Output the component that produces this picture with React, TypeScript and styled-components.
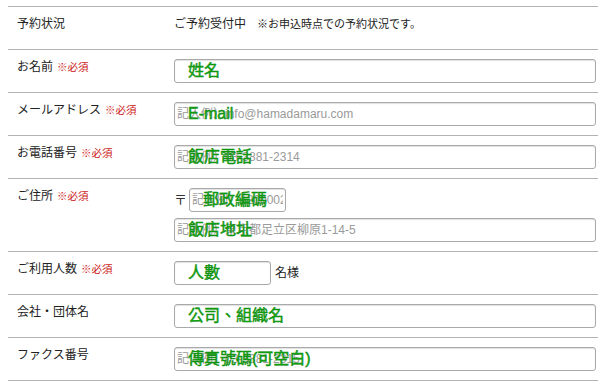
import React from "react";
import styled, { createGlobalStyle } from "styled-components";

const GlobalStyle = createGlobalStyle`
  html, body {
    margin: 0;
    padding: 0;
    background: #ffffff;
  }
  body {
    font-family: "Liberation Sans", "Noto Sans CJK JP", sans-serif;
    color: #333333;
  }
`;

const Page = styled.div`
  width: 600px;
  padding: 6px 2px 0 8px;
  box-sizing: border-box;
`;

const Table = styled.div`
  border-top: 1px solid #b2b2b2;
`;

const Row = styled.div`
  display: grid;
  grid-template-columns: 166px 1fr;
  min-height: 43px;
  box-sizing: border-box;
  border-bottom: 1px solid #b2b2b2;
`;

const Label = styled.div`
  padding: 10px 0 0 9px;
  font-size: 12px;
  line-height: 14px;
  color: #222222;
  white-space: nowrap;
`;

const Required = styled.span`
  margin-left: 4px;
  font-size: 10.5px;
  color: #cc2020;
`;

const Value = styled.div<{ $text?: boolean }>`
  padding: ${(p) => (p.$text ? "10px 2px 0 0" : "9px 2px 9px 0")};
  display: flex;
  flex-direction: column;
  gap: 6px;
  font-size: 12px;
  line-height: 14px;
`;

const Status = styled.div`
  display: flex;
  align-items: baseline;
  gap: 11px;
  color: #222222;
`;

const Note = styled.span`
  font-size: 11px;
`;

const Line = styled.div`
  display: flex;
  align-items: center;
  gap: 3px;
`;

const Field = styled.div<{ $w?: number }>`
  position: relative;
  width: ${(p) => (p.$w ? `${p.$w}px` : "100%")};
  flex: none;
`;

const Input = styled.input`
  display: block;
  width: 100%;
  height: 24px;
  box-sizing: border-box;
  margin: 0;
  padding: 0 2px;
  border: 1px solid #a9a9a9;
  border-radius: 3px;
  box-shadow: inset 0 1px 1px rgba(0, 0, 0, 0.12);
  font-family: "Liberation Sans", "Noto Sans CJK JP", sans-serif;
  font-size: 12px;
  color: #333333;
  background: #ffffff;
  &::placeholder {
    color: #9a9a9a;
  }
`;

const Overlay = styled.span`
  position: absolute;
  left: 14px;
  top: 50%;
  transform: translateY(-52%);
  font-family: "Liberation Sans", "Noto Sans CJK TC", sans-serif;
  font-size: 16px;
  font-weight: 400;
  line-height: 18px;
  color: #10a510;
  -webkit-text-stroke: 0.45px #0c8a0c;
  white-space: nowrap;
  pointer-events: none;
`;

const Postal = styled.span`
  font-size: 13px;
  width: 12px;
`;

const Suffix = styled.span`
  margin-left: 1px;
  color: #222222;
`;

type FieldProps = { note: string; placeholder?: string; width?: number };

const AnnotatedInput = ({ note, placeholder, width }: FieldProps) => (
  <Field $w={width}>
    <Input placeholder={placeholder} />
    <Overlay>{note}</Overlay>
  </Field>
);

const Must = () => <Required>※必須</Required>;

export default function App() {
  return (
    <>
      <GlobalStyle />
      <Page>
        <Table>
          <Row>
            <Label>予約状況</Label>
            <Value $text>
              <Status>
                <span>ご予約受付中</span>
                <Note>※お申込時点での予約状況です。</Note>
              </Status>
            </Value>
          </Row>
          <Row>
            <Label>
              お名前<Must />
            </Label>
            <Value>
              <AnnotatedInput note="姓名" />
            </Value>
          </Row>
          <Row>
            <Label>
              メールアドレス<Must />
            </Label>
            <Value>
              <AnnotatedInput note="E-mail" placeholder="記入例）info@hamadamaru.com" />
            </Value>
          </Row>
          <Row>
            <Label>
              お電話番号<Must />
            </Label>
            <Value>
              <AnnotatedInput note="飯店電話" placeholder="記入例）03-3881-2314" />
            </Value>
          </Row>
          <Row>
            <Label>
              ご住所<Must />
            </Label>
            <Value>
              <Line>
                <Postal>〒</Postal>
                <AnnotatedInput note="郵政編碼" placeholder="記入例）1200002" width={97} />
              </Line>
              <AnnotatedInput note="飯店地址" placeholder="記入例）東京都足立区柳原1-14-5" />
            </Value>
          </Row>
          <Row>
            <Label>
              ご利用人数<Must />
            </Label>
            <Value>
              <Line>
                <AnnotatedInput note="人數" width={97} />
                <Suffix>名様</Suffix>
              </Line>
            </Value>
          </Row>
          <Row>
            <Label>会社・団体名</Label>
            <Value>
              <AnnotatedInput note="公司、組織名" />
            </Value>
          </Row>
          <Row>
            <Label>ファクス番号</Label>
            <Value>
              <AnnotatedInput note="傳真號碼(可空白)" placeholder="記入例）03-3881-2315" />
            </Value>
          </Row>
        </Table>
      </Page>
    </>
  );
}
